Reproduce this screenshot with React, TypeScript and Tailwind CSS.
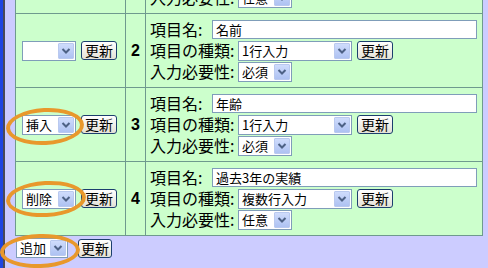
import React from 'react';

type Row = { n: number; op: string; name: string; kind: string; req: string };

const ROWS: Row[] = [
  { n: 1, op: '', name: '氏名', kind: '1行入力', req: '任意' },
  { n: 2, op: '', name: '名前', kind: '1行入力', req: '必須' },
  { n: 3, op: '挿入', name: '年齢', kind: '1行入力', req: '必須' },
  { n: 4, op: '削除', name: '過去3年の実績', kind: '複数行入力', req: '任意' },
];

const Arrow = () => (
  <div className="mr-px ml-auto flex h-[16px] w-[16px] items-center justify-center rounded-[1px] border border-[#b9c9ef] bg-linear-to-b from-[#cfdcfc] to-[#aec2f2]">
    <svg width="10" height="8" viewBox="0 0 10 8">
      <polyline points="1.5,2 5,5.5 8.5,2" fill="none" stroke="#4d6185" strokeWidth="2" />
    </svg>
  </div>
);

const Select = ({ value, className }: { value: string; className: string }) => (
  <div className={`flex h-[20px] shrink-0 items-center border border-[#7f9db9] bg-white text-[13px] leading-[18px] ${className}`}>
    <span className="pl-[3px] whitespace-nowrap">{value}</span>
    <Arrow />
  </div>
);

const Button = ({ className = 'w-[36px]' }: { className?: string }) => (
  <div className={`flex h-[19px] shrink-0 items-center justify-center rounded-[3px] border border-[#1c3f6e] bg-linear-to-b from-white to-[#e4e1d6] text-[14px] leading-[17px] ${className}`}>
    更新
  </div>
);

const Ring = ({ className }: { className: string }) => (
  <div className={`pointer-events-none absolute rounded-[50%] border-[4px] border-[#e8982c] ${className}`} />
);

export default function App() {
  return (
    <div
      className="relative flex h-[268px] w-[488px] overflow-hidden bg-[#ccccff] text-black"
      style={{ fontFamily: '"Noto Sans CJK JP", "Noto Sans", sans-serif' }}
    >
      <div className="w-[3px] bg-[#1f46e0]" />
      <div className="w-[2px] bg-[#4a4a58]" />
      <div className="flex flex-col">
        <div className="mt-[-60px] ml-[10px] w-[468px] border-x border-[#6e9a8e] bg-[#ccffcc]">
          {ROWS.map((r) => (
            <div key={r.n} className="flex h-[74px] border-b border-[#6e9a8e]">
              <div className="flex w-[110px] items-center gap-[5px] border-r border-[#6e9a8e] pl-[6px]">
                <Select value={r.op} className="w-[54px]" />
                <Button />
              </div>
              <div className="flex w-[20px] items-center justify-center border-r border-[#6e9a8e] text-[16px] font-bold" style={{ fontFamily: '"Liberation Sans", Arial, sans-serif' }}>
                {r.n}
              </div>
              <div className="flex flex-1 flex-col pt-[5px] pr-[5px] pl-[4px] text-[16px] leading-[19px]">
                <div className="flex h-[21px] items-center">
                  <span className="w-[62px] shrink-0">項目名:</span>
                  <div className="flex h-[19px] flex-1 items-center border border-[#7f9db9] bg-white pl-[3px] text-[13px] leading-[17px]">{r.name}</div>
                </div>
                <div className="flex h-[21px] items-center gap-[5px]">
                  <span className="-mr-[5px] w-[88px] shrink-0">項目の種類:</span>
                  <Select value={r.kind} className="w-[114px]" />
                  <Button />
                </div>
                <div className="flex h-[21px] items-center">
                  <span className="w-[88px] shrink-0">入力必要性:</span>
                  <Select value={r.req} className="w-[54px]" />
                </div>
              </div>
            </div>
          ))}
        </div>
        <div className="mt-[2px] ml-[11px] flex items-center gap-[10px]">
          <Select value="追加" className="w-[52px]" />
          <Button className="w-[34px]" />
        </div>
      </div>
      <Ring className="top-[108px] left-[6px] h-[37px] w-[78px] -rotate-3" />
      <Ring className="top-[181px] left-[6px] h-[36px] w-[80px] -rotate-3" />
      <Ring className="top-[234px] left-[0px] h-[34px] w-[80px] -rotate-2" />
    </div>
  );
}
